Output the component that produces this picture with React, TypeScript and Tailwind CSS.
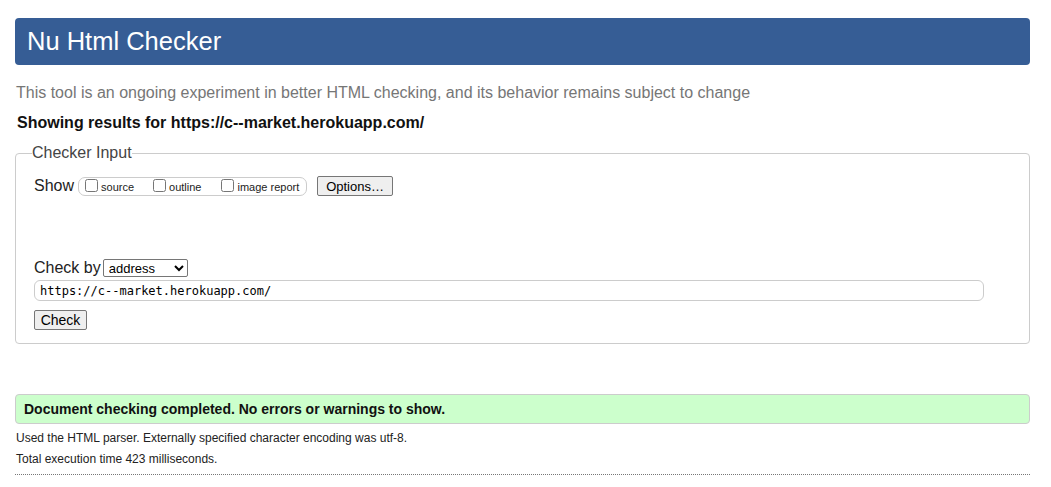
import React from "react";

export default function App() {
  return (
    <div className="min-h-screen bg-white pl-[15px] pr-[21px] pt-[18px] text-black" style={{ fontFamily: '"Liberation Sans", Arial, sans-serif' }}>
      {/* Header */}
      <div className="h-[47px] rounded-[4px] bg-[#365d95] px-[12px] flex items-center">
        <h1 className="text-[25.5px] leading-none text-white">Nu Html Checker</h1>
      </div>

      <p className="mt-[18px] px-[1px] text-[16px] leading-[20px] text-[#767676]">
        This tool is an ongoing experiment in better HTML checking, and its behavior remains subject to change
      </p>
      <p className="mt-[10px] px-[2px] text-[16px] leading-[20px] font-bold text-[#111]">
        Showing results for https://c--market.herokuapp.com/
      </p>

      {/* Checker input */}
      <fieldset className="mt-[11px] h-[200px] rounded-[4px] border border-[#cccccc] px-[18px] pt-[14px]">
        <legend className="px-0 ml-[-2px] text-[16px] leading-[18px] text-[#444]">Checker Input</legend>
        <div className="flex items-center h-[20px]">
          <span className="text-[16px] text-[#222] mr-[4px]">Show</span>
          <div className="h-[19px] w-[229px] rounded-[7px] border border-[#cccccc] flex items-center px-[6px] text-[11px] text-[#222]">
            <label className="flex items-center">
              <input type="checkbox" className="w-[13px] h-[13px] m-0 mr-[3px] -translate-y-[1px]" />
              <span className="translate-y-[1px]">source</span>
            </label>
            <label className="flex items-center ml-[19px]">
              <input type="checkbox" className="w-[13px] h-[13px] m-0 mr-[3px] -translate-y-[1px]" />
              <span className="translate-y-[1px]">outline</span>
            </label>
            <label className="flex items-center ml-[20px]">
              <input type="checkbox" className="w-[13px] h-[13px] m-0 mr-[3px] -translate-y-[1px]" />
              <span className="translate-y-[1px]">image report</span>
            </label>
          </div>
          <button className="ml-[10px] h-[20px] w-[76px] rounded-[2px] border border-[#767676] bg-[#efefef] text-[13px] text-black leading-none">
            Options…
          </button>
        </div>

        <div className="mt-[63px] flex items-center h-[18px]">
          <span className="text-[16px] text-[#222] mr-[2px]">Check by</span>
          <select className="h-[18px] w-[85px] rounded-[2px] border border-[#767676] bg-white text-[13px] leading-none px-[1px] text-black">
            <option>address</option>
          </select>
        </div>
        <input
          type="text"
          defaultValue="https://c--market.herokuapp.com/"
          className="mt-[3px] block h-[21px] w-[950px] rounded-[6px] border border-[#cccccc] px-[5px] text-[12px] text-black"
          style={{ fontFamily: '"DejaVu Sans Mono", "Liberation Mono", monospace' }}
        />
        <button className="mt-[9px] block h-[20px] w-[53px] rounded-[2px] border border-[#767676] bg-[#efefef] text-[14px] text-black leading-none">
          Check
        </button>
      </fieldset>

      {/* Result */}
      <div className="mt-[50px] h-[30px] rounded-[4px] border border-[#cccccc] bg-[#ccffcc] px-[8px] flex items-center">
        <span className="text-[14px] font-bold text-[#111]">Document checking completed. No errors or warnings to show.</span>
      </div>
      <p className="mt-[7px] px-[1px] text-[12px] leading-[14px] text-[#222]">
        Used the HTML parser. Externally specified character encoding was utf-8.
      </p>
      <p className="mt-[7px] px-[1px] text-[12px] leading-[14px] text-[#222]">
        Total execution time 423 milliseconds.
      </p>
      <hr className="mt-[8px] border-0 border-t border-dotted border-[#777]" />
    </div>
  );
}
